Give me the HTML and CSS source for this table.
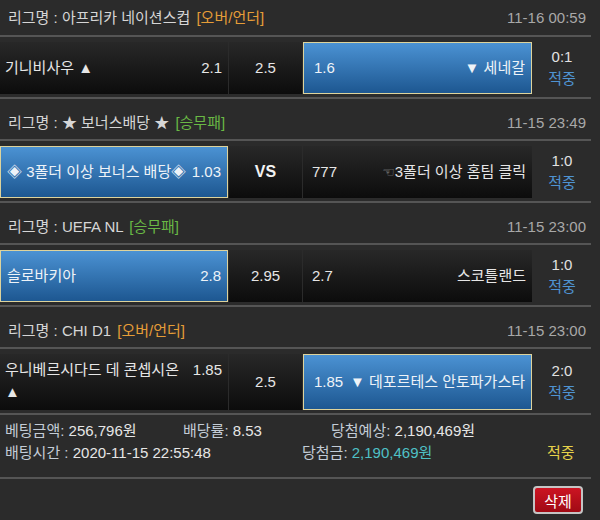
FILE: index.html
```html
<!DOCTYPE html>
<html lang="ko">
<head>
  <meta charset="UTF-8" />
  <meta name="viewport" content="width=device-width, initial-scale=1.0"/>
  <title>베팅내역</title>
  <link rel="stylesheet" href="styles.css">
</head>
<body>
  <div class="slip">

    <div class="game">
      <div class="league">
        <span class="name">리그명 : 아프리카 네이션스컵 <span class="type over">[오버/언더]</span></span>
        <span class="date">11-16 00:59</span>
      </div>
      <div class="match">
        <div class="pick"><span class="team">기니비사우 ▲</span><span class="odd">2.1</span></div>
        <div class="pick mid">2.5</div>
        <div class="pick selected"><span class="odd">1.6</span><span class="team">▼ 세네갈</span></div>
        <div class="result"><span>0:1</span><span class="hit">적중</span></div>
      </div>
    </div>

    <div class="game">
      <div class="league">
        <span class="name">리그명 : ★ 보너스배당 ★ <span class="type win">[승무패]</span></span>
        <span class="date">11-15 23:49</span>
      </div>
      <div class="match">
        <div class="pick selected"><span class="team">◈ 3폴더 이상 보너스 배당◈</span><span class="odd">1.03</span></div>
        <div class="pick mid vs">VS</div>
        <div class="pick"><span class="odd">777</span><span class="team"><span class="hand">☜</span>3폴더 이상 홈팀 클릭</span></div>
        <div class="result"><span>1:0</span><span class="hit">적중</span></div>
      </div>
    </div>

    <div class="game">
      <div class="league">
        <span class="name">리그명 : UEFA NL <span class="type win">[승무패]</span></span>
        <span class="date">11-15 23:00</span>
      </div>
      <div class="match">
        <div class="pick selected"><span class="team">슬로바키아</span><span class="odd">2.8</span></div>
        <div class="pick mid">2.95</div>
        <div class="pick"><span class="odd">2.7</span><span class="team">스코틀랜드</span></div>
        <div class="result"><span>1:0</span><span class="hit">적중</span></div>
      </div>
    </div>

    <div class="game">
      <div class="league">
        <span class="name">리그명 : CHI D1 <span class="type over">[오버/언더]</span></span>
        <span class="date">11-15 23:00</span>
      </div>
      <div class="match tall">
        <div class="pick wrap"><span class="team">우니베르시다드 데 콘셉시온<br>▲</span><span class="odd">1.85</span></div>
        <div class="pick mid">2.5</div>
        <div class="pick selected"><span class="odd">1.85</span><span class="team">▼ 데포르테스 안토파가스타</span></div>
        <div class="result"><span>2:0</span><span class="hit">적중</span></div>
      </div>
    </div>

    <div class="summary">
      <div class="line">
        <span class="cell w1"><span class="label">베팅금액:</span> 256,796원</span>
        <span class="cell w2"><span class="label">배당률:</span> 8.53</span>
        <span class="cell"><span class="label">당첨예상:</span> 2,190,469원</span>
      </div>
      <div class="line">
        <span class="cell w3"><span class="label">배팅시간 :</span> 2020-11-15 22:55:48</span>
        <span class="cell w4"><span class="label">당첨금:</span> <span class="won">2,190,469원</span></span>
        <span class="cell status">적중</span>
      </div>
    </div>

    <div class="actions">
      <button class="delete">삭제</button>
    </div>

  </div>
</body>
</html>
```

FILE: styles.css
```css
:root {
  --bg: #2b2b2b;
  --line: #555555;
  --text: #d6d6d6;
  --muted: #a8a8a8;
  --blue-top: #4b92d3;
  --blue-bottom: #1d5791;
  --pick-border: #ddd39c;
}

* {
  margin: 0;
  padding: 0;
  box-sizing: border-box;
}

body {
  background-color: var(--bg);
  color: var(--text);
  font-family: 'Liberation Sans', 'Noto Sans CJK KR', sans-serif;
  font-size: 15px;
  line-height: 22px;
}

.slip {
  width: 591px;
}

/* league header */

.league {
  height: 42px;
  padding: 8px 5px 0 8px;
  display: flex;
  align-items: center;
  justify-content: space-between;
  border-bottom: 2px solid var(--line);
}

.game:first-child .league {
  height: 37px;
  padding-top: 0;
}

.league .date {
  color: var(--muted);
}

.type.over {
  color: #e59d38;
  margin-left: 2px;
}

.type.win {
  color: #69b845;
  margin-left: 2px;
}

/* match row */

.match {
  display: grid;
  grid-template-columns: 228px 73px 229px 1fr;
  column-gap: 1px;
  padding: 5px 0 3px;
  border-bottom: 2px solid var(--line);
}

.pick {
  min-height: 52px;
  padding: 0 6px 0 5px;
  display: flex;
  align-items: center;
  justify-content: space-between;
  background: linear-gradient(#282828, #0c0c0c);
  color: #e6e6e6;
}

.match.tall .pick {
  min-height: 56px;
}

.pick.wrap {
  align-items: flex-start;
  padding-top: 5px;
}

.pick.mid {
  justify-content: center;
  padding: 0;
}

.pick.vs {
  font-weight: bold;
  font-size: 16px;
  color: #f2f2f2;
}

.pick.selected {
  background: linear-gradient(var(--blue-top), var(--blue-bottom));
  border: 1px solid var(--pick-border);
  padding: 0 6px;
  color: #eef3f8;
}

.pick .odd {
  margin-left: 4px;
}

.pick .hand {
  font-family: 'DejaVu Sans', sans-serif;
  font-size: 14px;
  color: #9a9a9a;
}

.result {
  display: flex;
  flex-direction: column;
  align-items: center;
  justify-content: center;
  color: #e2e2e2;
}

.result .hit {
  color: #4f93d2;
}

/* summary */

.summary {
  padding: 5px 5px 13px;
  border-bottom: 2px solid var(--line);
}

.summary .line {
  display: flex;
  color: #e6e6e6;
}

.summary .w1 { width: 178px; }
.summary .w2 { width: 148px; }
.summary .w3 { width: 297px; }
.summary .w4 { width: 245px; }

.summary .label {
  color: #c3ccd6;
}

.summary .won {
  color: #4fc0c6;
}

.summary .status {
  color: #e6d24a;
}

.actions {
  display: flex;
  justify-content: flex-end;
  padding: 7px 8px 0 0;
}

.delete {
  width: 50px;
  height: 28px;
  border: 2px solid #c4c4c4;
  border-radius: 4px;
  background: linear-gradient(#cc1422, #a00a14);
  color: #ffffff;
  font-family: 'Liberation Sans', 'Noto Sans CJK KR', sans-serif;
  font-size: 15px;
  cursor: pointer;
}
```
